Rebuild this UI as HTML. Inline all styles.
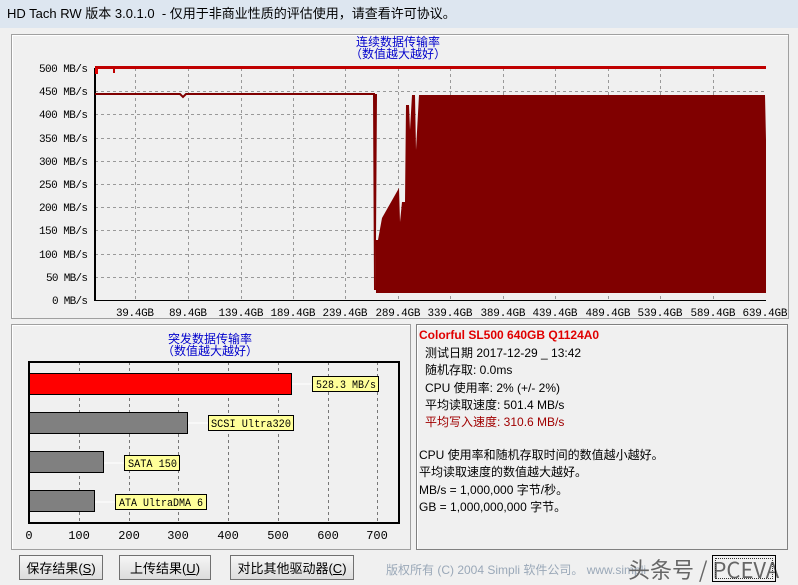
<!DOCTYPE html>
<html><head><meta charset="utf-8"><style>
body{margin:0;width:798px;height:585px;overflow:hidden;background:#b9d1ea;font-family:"Liberation Sans","Noto Sans CJK SC",sans-serif;}
#win{position:absolute;left:0;top:0;width:798px;height:585px;background:#f0f0f0;}
#title{position:absolute;left:0;top:0;width:798px;height:28px;background:#dde6f0;font-size:13px;line-height:28px;padding-left:7px;box-sizing:border-box;color:#000;}
.panel{position:absolute;border:1px solid #a0a0a0;box-shadow:inset 1px 1px 0 #fff;}
.btn{position:absolute;top:555px;height:25px;border:1px solid #707070;background:linear-gradient(#f6f6f6,#dcdcdc);font-size:13px;line-height:25px;text-align:center;box-sizing:border-box;}
.info{position:absolute;font-size:12px;line-height:17.3px;color:#000;}
</style></head><body><div id="win">
<div id="title">HD Tach RW 版本 3.0.1.0 &nbsp;- 仅用于非商业性质的评估使用，请查看许可协议。</div>
<div class="panel" style="left:11px;top:34px;width:776px;height:283px;"></div>
<div class="panel" style="left:11px;top:324px;width:398px;height:224px;"></div>
<div class="panel" style="left:416px;top:324px;width:370px;height:224px;background:#f0f0f0;border-color:#808080;"></div>
<svg width="798" height="585" style="position:absolute;left:0;top:0" font-family="Liberation Mono, monospace">
<text x="398" y="46" font-size="12" fill="#0000cc" text-anchor="middle" font-family="Noto Sans CJK SC">连续数据传输率</text>
<text x="398" y="58" font-size="12" fill="#0000cc" text-anchor="middle" font-family="Noto Sans CJK SC">（数值越大越好）</text>
<g stroke="#999" stroke-dasharray="3,3" stroke-width="1">
<line x1="95" y1="91.5" x2="765" y2="91.5"/><line x1="95" y1="114.5" x2="765" y2="114.5"/><line x1="95" y1="138.5" x2="765" y2="138.5"/><line x1="95" y1="161.5" x2="765" y2="161.5"/><line x1="95" y1="184.5" x2="765" y2="184.5"/><line x1="95" y1="207.5" x2="765" y2="207.5"/><line x1="95" y1="230.5" x2="765" y2="230.5"/><line x1="95" y1="254.5" x2="765" y2="254.5"/><line x1="95" y1="277.5" x2="765" y2="277.5"/>
<line x1="135.5" y1="68" x2="135.5" y2="300"/><line x1="188.5" y1="68" x2="188.5" y2="300"/><line x1="241.5" y1="68" x2="241.5" y2="300"/><line x1="293.5" y1="68" x2="293.5" y2="300"/><line x1="345.5" y1="68" x2="345.5" y2="300"/><line x1="398.5" y1="68" x2="398.5" y2="300"/><line x1="450.5" y1="68" x2="450.5" y2="300"/><line x1="503.5" y1="68" x2="503.5" y2="300"/><line x1="555.5" y1="68" x2="555.5" y2="300"/><line x1="608.5" y1="68" x2="608.5" y2="300"/><line x1="660.5" y1="68" x2="660.5" y2="300"/><line x1="713.5" y1="68" x2="713.5" y2="300"/>
</g>
<line x1="95" y1="68" x2="95" y2="301" stroke="#000" stroke-width="2"/>
<line x1="94" y1="300.5" x2="766" y2="300.5" stroke="#000" stroke-width="1"/>
<polygon fill="#800000" points="374,94 377,94 376,240 378,240 382,218 399,188 400,222 402,202 405,202 406,105 409,105 410,130 412,95 415,95 416,150 419,95 765,95 766,140 766,293 376,293"/>
<polyline fill="none" stroke="#800000" stroke-width="2" points="95,94 180,94 183,97 186,94 374,94 375,290"/>
<rect x="95" y="66" width="671" height="3" fill="#c00000"/>
<rect x="95" y="68" width="3" height="6" fill="#e00000"/><rect x="113" y="68" width="2" height="5" fill="#c00000"/>
<g font-size="11" fill="#000" text-anchor="end">
<text x="88" y="72" textLength="49">500 MB/s</text><text x="88" y="95" textLength="49">450 MB/s</text><text x="88" y="118" textLength="49">400 MB/s</text><text x="88" y="142" textLength="49">350 MB/s</text><text x="88" y="165" textLength="49">300 MB/s</text><text x="88" y="188" textLength="49">250 MB/s</text><text x="88" y="211" textLength="49">200 MB/s</text><text x="88" y="234" textLength="49">150 MB/s</text><text x="88" y="258" textLength="49">100 MB/s</text><text x="88" y="281" textLength="42">50 MB/s</text><text x="88" y="304" textLength="36">0 MB/s</text>
</g>
<g font-size="11" fill="#000" text-anchor="middle">
<text x="135" y="316" textLength="38">39.4GB</text><text x="188" y="316" textLength="38">89.4GB</text><text x="241" y="316" textLength="45">139.4GB</text><text x="293" y="316" textLength="45">189.4GB</text><text x="345" y="316" textLength="45">239.4GB</text><text x="398" y="316" textLength="45">289.4GB</text><text x="450" y="316" textLength="45">339.4GB</text><text x="503" y="316" textLength="45">389.4GB</text><text x="555" y="316" textLength="45">439.4GB</text><text x="608" y="316" textLength="45">489.4GB</text><text x="660" y="316" textLength="45">539.4GB</text><text x="713" y="316" textLength="45">589.4GB</text><text x="765" y="316" textLength="45">639.4GB</text>
</g>
<text x="210" y="343" font-size="12" fill="#0000cc" text-anchor="middle" font-family="Noto Sans CJK SC">突发数据传输率</text>
<text x="210" y="355" font-size="12" fill="#0000cc" text-anchor="middle" font-family="Noto Sans CJK SC">（数值越大越好）</text>
<g stroke="#777" stroke-dasharray="3,3"><line x1="79.5" y1="362" x2="79.5" y2="523"/><line x1="129.5" y1="362" x2="129.5" y2="523"/><line x1="178.5" y1="362" x2="178.5" y2="523"/><line x1="228.5" y1="362" x2="228.5" y2="523"/><line x1="278.5" y1="362" x2="278.5" y2="523"/><line x1="328.5" y1="362" x2="328.5" y2="523"/><line x1="377.5" y1="362" x2="377.5" y2="523"/></g>
<rect x="29" y="362" width="370" height="161" fill="none" stroke="#000" stroke-width="2"/>
<g stroke="#fff"><line x1="291" y1="384" x2="313" y2="384"/><line x1="187" y1="423" x2="208" y2="423"/><line x1="103" y1="463" x2="124" y2="463"/><line x1="94" y1="502" x2="116" y2="502"/></g>
<rect x="29.5" y="373.5" width="262" height="21" fill="#ff0000" stroke="#000"/>
<rect x="29.5" y="412.5" width="158" height="21" fill="#808080" stroke="#000"/>
<rect x="29.5" y="451.5" width="74" height="21" fill="#808080" stroke="#000"/>
<rect x="29.5" y="490.5" width="65" height="21" fill="#808080" stroke="#000"/>
<g font-size="11" fill="#000">
<rect x="312.5" y="376.5" width="66" height="15" fill="#ffff99" stroke="#000"/><text x="316" y="388" textLength="60" lengthAdjust="spacingAndGlyphs">528.3 MB/s</text>
<rect x="208.5" y="415.5" width="85" height="15" fill="#ffff99" stroke="#000"/><text x="211" y="427" textLength="80" lengthAdjust="spacingAndGlyphs">SCSI Ultra320</text>
<rect x="124.5" y="455.5" width="55" height="15" fill="#ffff99" stroke="#000"/><text x="128" y="467" textLength="49" lengthAdjust="spacingAndGlyphs">SATA 150</text>
<rect x="115.5" y="494.5" width="91" height="15" fill="#ffff99" stroke="#000"/><text x="119" y="506" textLength="84" lengthAdjust="spacingAndGlyphs">ATA UltraDMA 6</text>
</g>
<g font-size="12" fill="#000" text-anchor="middle">
<text x="29" y="539">0</text><text x="79" y="539">100</text><text x="129" y="539">200</text><text x="178" y="539">300</text><text x="228" y="539">400</text><text x="278" y="539">500</text><text x="328" y="539">600</text><text x="377" y="539">700</text>
</g>
</svg>
<div class="info" style="left:419px;top:327px;color:#e00000;font-weight:bold;">Colorful SL500 640GB Q1124A0</div>
<div class="info" style="left:425px;top:345px;">测试日期 2017-12-29 _ 13:42<br>随机存取: 0.0ms<br>CPU 使用率: 2% (+/- 2%)<br>平均读取速度: 501.4 MB/s<br><span style="color:#a00000">平均写入速度: 310.6 MB/s</span></div>
<div class="info" style="left:419px;top:447px;">CPU 使用率和随机存取时间的数值越小越好。<br>平均读取速度的数值越大越好。<br>MB/s = 1,000,000 字节/秒。<br>GB = 1,000,000,000 字节。</div>
<div class="btn" style="left:19px;width:84px;">保存结果(<u>S</u>)</div>
<div class="btn" style="left:119px;width:92px;">上传结果(<u>U</u>)</div>
<div class="btn" style="left:230px;width:124px;">对比其他驱动器(<u>C</u>)</div>
<div style="position:absolute;left:386px;top:561px;font-size:12px;color:#9aa8b8;">版权所有 (C) 2004 Simpli 软件公司。 www.simpli</div>
<div style="position:absolute;left:628px;top:553px;font-size:22px;color:#666;font-family:'Noto Sans CJK SC',sans-serif;">头条号 / PCEVA</div>
<div style="position:absolute;left:712px;top:555px;width:62px;height:25px;border:1px solid #000;outline:1px dotted #333;outline-offset:-4px;"></div>
</div></body></html>
